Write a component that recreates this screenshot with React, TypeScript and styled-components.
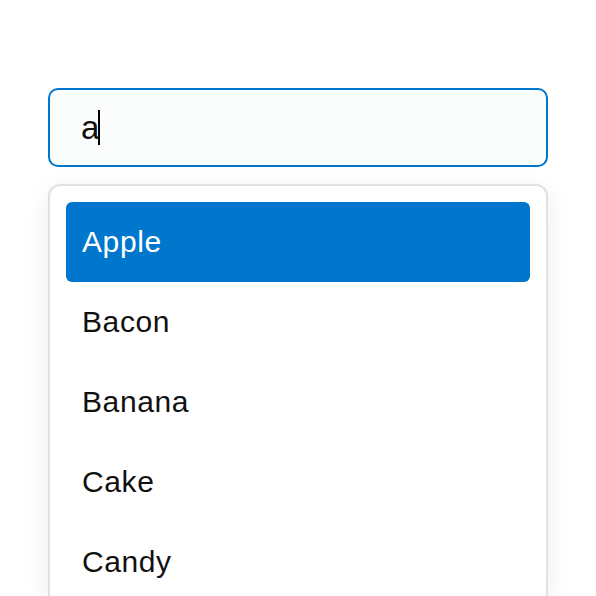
import styled, { createGlobalStyle } from 'styled-components';

const items = ['Apple', 'Bacon', 'Banana', 'Cake', 'Candy'];

const GlobalStyle = createGlobalStyle`
  html, body {
    margin: 0;
    padding: 0;
    background: #ffffff;
    overflow: hidden;
  }
  body {
    font-family: 'Liberation Sans', Arial, sans-serif;
  }
`;

const Page = styled.div`
  width: 596px;
  height: 596px;
  padding: 88px 48px 0;
  box-sizing: border-box;
  display: flex;
  flex-direction: column;
  gap: 17px;
`;

const InputBox = styled.div`
  height: 79px;
  box-sizing: border-box;
  border: 2px solid #0077cc;
  border-radius: 10px;
  background: #fbfcfc;
  display: flex;
  align-items: center;
  padding: 0 31px;
  font-size: 33px;
  color: #111111;
`;

const Caret = styled.span`
  display: inline-block;
  width: 2px;
  height: 35px;
  background: #000000;
  margin-left: -1px;
`;

const Menu = styled.ul`
  list-style: none;
  margin: 0;
  padding: 16px;
  border: 2px solid #dde2e7;
  border-bottom: none;
  border-radius: 12px 12px 0 0;
  background: #ffffff;
  box-shadow: 0 6px 24px rgba(20, 30, 50, 0.08);
  display: flex;
  flex-direction: column;
  flex: 1;
  overflow: hidden;
`;

const Item = styled.li<{ $active?: boolean }>`
  flex: 0 0 80px;
  display: flex;
  align-items: center;
  padding: 0 16px;
  border-radius: 6px;
  font-size: 30px;
  letter-spacing: 0.6px;
  color: ${(p) => (p.$active ? '#ffffff' : '#111111')};
  background: ${(p) => (p.$active ? '#0077cc' : 'transparent')};
`;

export default function App() {
  return (
    <>
      <GlobalStyle />
      <Page>
        <InputBox>
          a<Caret />
        </InputBox>
        <Menu>
          {items.map((item, i) => (
            <Item key={item} $active={i === 0}>
              {item}
            </Item>
          ))}
        </Menu>
      </Page>
    </>
  );
}
